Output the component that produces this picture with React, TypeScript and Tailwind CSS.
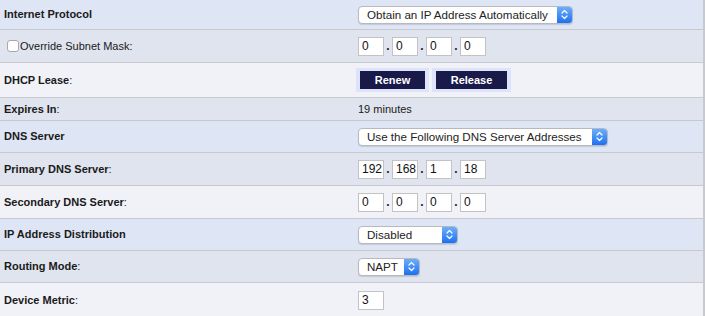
import type { ReactNode } from "react";

type Tone = "blue" | "gray" | "light";

const toneClass: Record<Tone, string> = {
  blue: "bg-[#dee5f5]",
  gray: "bg-[#e0e4ef]",
  light: "bg-[#f1f2f8]",
};

interface RowProperties {
  tone: Tone;
  height: string;
  label: ReactNode;
  children?: ReactNode;
  last?: boolean;
}

function Row({ tone, height, label, children, last = false }: RowProperties) {
  return (
    <div
      className={`flex items-center ${height} ${toneClass[tone]} ${
        last ? "" : "border-b border-[#c7c9cf]"
      }`}
    >
      <div className="w-[353px] pl-[4px] text-[11px] text-[#1a1a1a]">{label}</div>
      <div className="flex-1 pl-[5px] flex items-center">{children}</div>
    </div>
  );
}

function Label({ text, colon = true }: { text: string; colon?: boolean }) {
  return (
    <span>
      <span className="font-bold">{text}</span>
      {colon && ":"}
    </span>
  );
}

function Select({ value, width }: { value: string; width: string }) {
  return (
    <div
      className={`flex h-[18px] ${width} rounded-[4px] border border-[#b9b9bd] bg-white shadow-[0_1px_1px_rgba(0,0,0,0.12)] overflow-hidden`}
    >
      <span className="flex-1 pl-[8px] text-[11.6px] leading-[16px] text-[#222] whitespace-nowrap">
        {value}
      </span>
      <span className="w-[15px] flex items-center justify-center bg-gradient-to-b from-[#6aaefb] to-[#1c6ff0]">
        <svg width="7" height="11" viewBox="0 0 7 11" fill="none">
          <path
            d="M1 4 L3.5 1.5 L6 4"
            stroke="white"
            strokeWidth="1.2"
            strokeLinecap="round"
            strokeLinejoin="round"
          />
          <path
            d="M1 7 L3.5 9.5 L6 7"
            stroke="white"
            strokeWidth="1.2"
            strokeLinecap="round"
            strokeLinejoin="round"
          />
        </svg>
      </span>
    </div>
  );
}

function Box({ value }: { value: string }) {
  return (
    <div className="w-[26px] h-[19px] border border-[#c3c3c6] bg-white pl-[3px] text-[12px] leading-[17px] text-[#111]">
      {value}
    </div>
  );
}

function Ip({ parts }: { parts: string[] }) {
  return (
    <div className="flex items-center">
      {parts.map((part, index) => (
        <div key={index} className="flex items-center">
          {index > 0 && (
            <span className="w-[8px] text-center text-[12px] leading-[19px] font-bold text-[#222]">
              .
            </span>
          )}
          <Box value={part} />
        </div>
      ))}
    </div>
  );
}

function ActionButton({ text, width }: { text: string; width: string }) {
  return (
    <div className="bg-[#dde4fa] p-[3px] px-[4px]">
      <div
        className={`${width} h-[18px] bg-[#1a1a4a] text-white text-[11px] font-bold leading-[18px] text-center`}
      >
        {text}
      </div>
    </div>
  );
}

export default function App() {
  return (
    <div className="w-[705px] h-[316px] overflow-hidden bg-white font-['Liberation_Sans',Arial,sans-serif]">
      <div className="w-[705px] border-r-2 border-[#c7c9cf]">
        <Row tone="blue" height="h-[30px]" label={<Label text="Internet Protocol" colon={false} />}>
          <Select value="Obtain an IP Address Automatically" width="w-[215px]" />
        </Row>
        <Row
          tone="gray"
          height="h-[33px]"
          label={
            <span className="flex items-center">
              <span className="ml-[3px] mr-[1px] w-[12px] h-[12px] rounded-[3px] border border-[#a9a9ad] bg-white" />
              Override Subnet Mask:
            </span>
          }
        >
          <Ip parts={["0", "0", "0", "0"]} />
        </Row>
        <Row tone="light" height="h-[35px]" label={<Label text="DHCP Lease" />}>
          <div className="flex gap-[3px] -ml-[2px]">
            <ActionButton text="Renew" width="w-[65px]" />
            <ActionButton text="Release" width="w-[71px]" />
          </div>
        </Row>
        <Row tone="gray" height="h-[23px]" label={<Label text="Expires In" />}>
          <span className="text-[11px] text-[#1a1a1a]">19 minutes</span>
        </Row>
        <Row tone="blue" height="h-[32px]" label={<Label text="DNS Server" colon={false} />}>
          <Select value="Use the Following DNS Server Addresses" width="w-[250px]" />
        </Row>
        <Row tone="gray" height="h-[33px]" label={<Label text="Primary DNS Server" />}>
          <Ip parts={["192", "168", "1", "18"]} />
        </Row>
        <Row tone="light" height="h-[33px]" label={<Label text="Secondary DNS Server" />}>
          <Ip parts={["0", "0", "0", "0"]} />
        </Row>
        <Row tone="blue" height="h-[32px]" label={<Label text="IP Address Distribution" colon={false} />}>
          <Select value="Disabled" width="w-[100px]" />
        </Row>
        <Row tone="gray" height="h-[32px]" label={<Label text="Routing Mode" />}>
          <Select value="NAPT" width="w-[62px]" />
        </Row>
        <Row tone="light" height="h-[34px]" label={<Label text="Device Metric" />} last>
          <Box value="3" />
        </Row>
      </div>
    </div>
  );
}
